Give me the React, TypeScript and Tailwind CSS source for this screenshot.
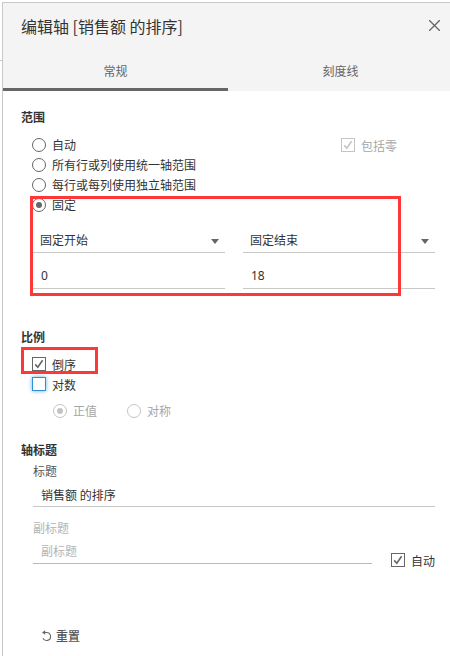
import { useState, type ReactNode } from "react";
import clsx from "clsx";

interface OptionProps {
  children: ReactNode;
  defaultChecked?: boolean;
  disabled?: boolean;
}

function Radio({
  children,
  name,
  defaultChecked,
  disabled,
}: OptionProps & { name: string }) {
  return (
    <label
      className={clsx(
        "flex h-5 items-center gap-1.5",
        disabled && "text-[#a6a6a6]"
      )}
    >
      <input
        type="radio"
        name={name}
        defaultChecked={defaultChecked}
        disabled={disabled}
        className="grid size-3.5 shrink-0 appearance-none place-items-center rounded-full border border-[#666] before:size-1.5 before:rounded-full before:bg-[#666] before:opacity-0 checked:before:opacity-100 disabled:border-[#c4c4c4] disabled:before:bg-[#c4c4c4]"
      />
      {children}
    </label>
  );
}

function Checkbox({
  children,
  defaultChecked,
  disabled,
  highlighted,
}: OptionProps & { highlighted?: boolean }) {
  return (
    <label
      className={clsx(
        "flex h-5 items-center gap-1.5",
        disabled && "text-[#a6a6a6]"
      )}
    >
      <span className="relative size-3.5 shrink-0">
        <input
          type="checkbox"
          defaultChecked={defaultChecked}
          disabled={disabled}
          className={clsx(
            "peer block size-3.5 appearance-none border disabled:border-[#c4c4c4]",
            highlighted
              ? "border-[#2d8fd5] shadow-[0_0_4px_#66afe9]"
              : "border-[#666]"
          )}
        />
        <svg
          viewBox="0 0 14 14"
          fill="none"
          stroke="currentColor"
          strokeWidth="1.6"
          className="pointer-events-none absolute inset-0 hidden text-[#666] peer-checked:block peer-disabled:text-[#c4c4c4]"
        >
          <path d="M3.2 7.4 5.8 10.2 10.6 3.2" />
        </svg>
      </span>
      <span className="pt-px">{children}</span>
    </label>
  );
}

function RangeEnd({
  label,
  options,
  value,
}: {
  label: string;
  options: string[];
  value: string;
}) {
  return (
    <div>
      <div className="relative">
        <select
          aria-label={label}
          className="block h-[26px] w-full appearance-none border-b border-[#c8c8c8] pr-5 pl-[7px]"
        >
          {options.map((option) => (
            <option key={option}>{option}</option>
          ))}
        </select>
        <svg
          viewBox="0 0 8 5"
          className="pointer-events-none absolute right-1.5 bottom-[9px] h-[5px] w-2 fill-[#666]"
        >
          <path d="M0 0h8L4 5z" />
        </svg>
      </div>
      <input
        type="text"
        aria-label={`${label}值`}
        defaultValue={value}
        className="mt-2.5 block h-[26px] w-full border-b border-[#c8c8c8] px-2 font-['Noto_Sans',sans-serif]"
      />
    </div>
  );
}

const tabs = ["常规", "刻度线"];

export default function App() {
  const [activeTab, setActiveTab] = useState("常规");

  return (
    <div className="relative min-h-screen overflow-hidden bg-white pt-0.5 pl-0.5 font-['Noto_Sans_CJK_SC',sans-serif] text-xs text-[#333]">
      {/* Edge of the sheet behind the dialog */}
      <div className="absolute top-15 left-0 h-px w-0.5 bg-[#c8c8c8]" />

      <div
        role="dialog"
        aria-labelledby="dialog-title"
        className="min-h-screen border-t border-l border-[#c8c8c8]"
      >
        <header className="bg-[#f4f4f4]">
          <div className="flex h-12 items-center justify-between pr-[9px] pb-0.5 pl-[18px]">
            <h1 id="dialog-title" className="text-base">
              编辑轴 [销售额 的排序]
            </h1>
            <button type="button" aria-label="关闭" className="mb-0.5 p-px">
              <svg
                viewBox="0 0 11 11"
                stroke="#666"
                strokeWidth="1.3"
                className="size-[11px]"
              >
                <path d="M0 0 11 11M11 0 0 11" />
              </svg>
            </button>
          </div>
          <div role="tablist" className="-mr-[3px] grid grid-cols-2">
            {tabs.map((tab) => (
              <button
                key={tab}
                type="button"
                role="tab"
                aria-selected={tab === activeTab}
                onClick={() => setActiveTab(tab)}
                className={clsx(
                  "h-10 border-b-3 pt-0.5 text-[#666]",
                  tab === activeTab ? "border-[#666]" : "border-transparent"
                )}
              >
                {tab}
              </button>
            ))}
          </div>
        </header>

        <main className="pt-4 pr-[15px] pl-[18px]">
          {/* Range */}
          <section className="relative">
            <h2 className="h-5 leading-5 font-bold">范围</h2>
            <div className="mt-2 flex items-start justify-between pl-[11px]">
              <div>
                <Radio name="range">自动</Radio>
                <Radio name="range">所有行或列使用统一轴范围</Radio>
                <Radio name="range">每行或每列使用独立轴范围</Radio>
                <Radio name="range" defaultChecked>
                  固定
                </Radio>
              </div>
              <div className="pr-[38px]">
                <Checkbox defaultChecked disabled>
                  包括零
                </Checkbox>
              </div>
            </div>
            <div className="mt-3 grid grid-cols-2 gap-[18px] pl-3">
              <RangeEnd label="开始" options={["固定开始", "自动"]} value="0" />
              <RangeEnd label="结束" options={["固定结束", "自动"]} value="18" />
            </div>
            <div className="pointer-events-none absolute top-[89px] right-[34px] -bottom-[7px] left-[9px] border-3 border-[#ff3737]" />
          </section>

          {/* Scale */}
          <section className="mt-[38px]">
            <h2 className="h-5 leading-5 font-bold">比例</h2>
            <div className="relative mt-[7px] pl-[11px]">
              <Checkbox defaultChecked>倒序</Checkbox>
              <Checkbox highlighted>对数</Checkbox>
              <div className="pointer-events-none absolute -top-[7px] left-0 h-[27px] w-[77px] border-3 border-[#ff3737]" />
            </div>
            <div className="mt-[7px] flex gap-[30px] pl-8">
              <Radio name="log" defaultChecked disabled>
                正值
              </Radio>
              <Radio name="log" disabled>
                对称
              </Radio>
            </div>
          </section>

          {/* Axis titles */}
          <section className="mt-[19px]">
            <h2 className="h-5 leading-5 font-bold">轴标题</h2>
            <div className="mt-px pl-3">
              <label htmlFor="title" className="block h-5 leading-5 text-[#555]">
                标题
              </label>
              <input
                id="title"
                type="text"
                defaultValue="销售额 的排序"
                className="block h-[26px] w-full border-b border-[#c8c8c8] px-2 pt-0.5"
              />
              <label
                htmlFor="subtitle"
                className="mt-[11px] block h-5 leading-5 text-[#b4b4b4]"
              >
                副标题
              </label>
              <div className="flex items-start gap-[19px]">
                <input
                  id="subtitle"
                  type="text"
                  placeholder="副标题"
                  className="h-[26px] min-w-0 flex-1 border-b border-[#b8b8b8] px-2 placeholder:text-[#b4b4b4]"
                />
                <div className="mt-3">
                  <Checkbox defaultChecked>自动</Checkbox>
                </div>
              </div>
            </div>
          </section>

          <button
            type="button"
            className="mt-14 ml-5 flex h-5 items-center gap-1 font-medium text-[#555]"
          >
            <svg
              viewBox="0 0 11 12"
              fill="none"
              stroke="#666"
              strokeWidth="1.1"
              className="h-3 w-[11px]"
            >
              <path d="M2 2.5h3.6a4 4 0 1 1-3.7 5.6" />
              <path d="M4.2.3 1 2.5l3.2 2.2z" fill="#666" stroke="none" />
            </svg>
            重置
          </button>
        </main>
      </div>
    </div>
  );
}
